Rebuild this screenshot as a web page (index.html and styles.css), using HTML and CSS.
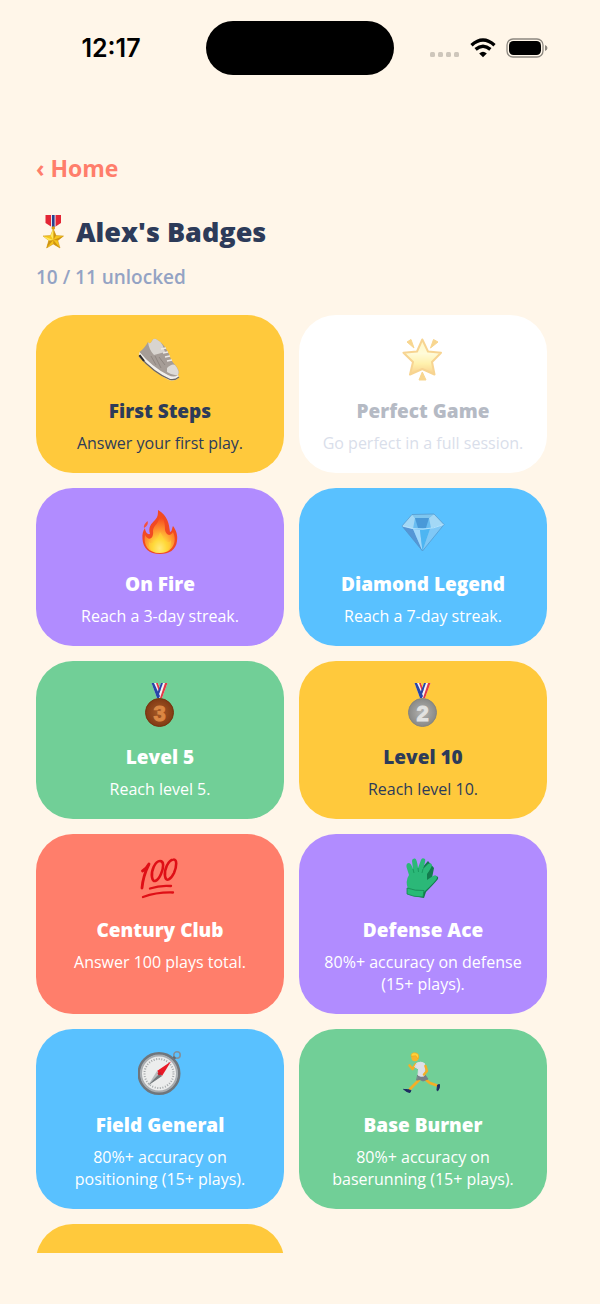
FILE: index.html
```html
<!DOCTYPE html>
<html lang="en">
<head>
  <meta charset="utf-8">
  <meta name="viewport" content="width=device-width, initial-scale=1">
  <title>Alex's Badges</title>
  <link rel="stylesheet" href="styles.css">
</head>
<body>
  <div class="screen">
    <header class="status-bar">
      <time class="clock">12:17</time>
      <div class="island"></div>
      <div class="status-icons">
        <svg width="30" height="20" viewBox="0 0 30 20" fill="#cec6bb">
          <rect x="0" y="14" width="5" height="5" rx="1.5"/>
          <rect x="8" y="14" width="5" height="5" rx="1.5"/>
          <rect x="16" y="14" width="5" height="5" rx="1.5"/>
          <rect x="24" y="14" width="5" height="5" rx="1.5"/>
        </svg>
        <svg width="26" height="20" viewBox="0 0 26 20" fill="none" stroke="#000" stroke-width="3.4">
          <path d="M1.5 7.2Q13-3 24.5 7.2"/>
          <path d="M5.6 11.4Q13 5 20.4 11.4"/>
          <path d="M13 19.3L9.2 15.4Q13 12.2 16.8 15.4Z" fill="#000" stroke="none"/>
        </svg>
        <svg width="42" height="20" viewBox="0 0 42 20">
          <rect x="1" y="1" width="36" height="18" rx="6" fill="none" stroke="#8d8880" stroke-width="1.3"/>
          <rect x="3" y="3" width="32" height="14" rx="4.5"/>
          <path d="M39 7Q41.5 8 41.5 10T39 13Z" fill="#8d8880"/>
        </svg>
      </div>
    </header>

    <main class="content">
      <a class="back" href="#">‹ Home</a>
      <h1 class="heading">
        <svg width="34" height="36" viewBox="0 0 34 36">
          <path d="M9.5 1H25V9L17.3 14L9.5 9Z" fill="#e32636"/>
          <path d="M15 1H19.6V13H15Z" fill="#e8e2ee"/>
          <path d="M16 1H18.6V13H16Z" fill="#26418f"/>
          <circle cx="17.3" cy="14" r="1.8" fill="#d99b12"/>
          <path d="M17.3 15L20 21.5L27.5 22L21.8 26.5L24 34L17.3 30L10.6 34L12.8 26.5L7 22L14.6 21.5Z" fill="#f6c51c" stroke="#c78e10" stroke-width=".5"/>
          <path d="M17.3 26V15L20 21.5ZM17.3 26L27.5 22L21.8 26.5ZM17.3 26L24 34L17.3 30ZM17.3 26L10.6 34L12.8 26.5Z" fill="#cf9312"/>
          <path d="M17.3 26V15L14.6 21.5ZM17.3 26L7 22L12.8 26.5Z" fill="#ffe85b"/>
        </svg>
        Alex's Badges
      </h1>
      <p class="progress">10 / 11 unlocked</p>

      <section class="badges">
        <article class="badge yellow">
          <svg class="icon" viewBox="0 0 44 44">
            <path d="M1.5 15L1 20Q16 36 31 43Q37 45 41 40L38 34Z" fill="#f2f0ed"/>
            <path d="M1 19Q16 36 32 42.5Q37 43.5 41 40" fill="none" stroke="#6d6660" stroke-width="1.2"/>
            <path d="M1.5 18L6 24" stroke="#2d2a2a" stroke-width="2"/>
            <path d="M1.5 15Q6 12 10 5Q12 8 14 4Q15 1 18 2Q23 5 27 10L31 17Q33 24 38 29Q42 34 40 38Q36 41 30 38Q14 30 1.5 15Z" fill="#a69d97"/>
            <path d="M10 5Q12 8 14 4Q15 1 18 2Q22 4 24.5 8L27 15L16 18Q11 13 10 5Z" fill="#d8d4cf"/>
            <path d="M29 31Q34 26 37 28Q42 34 40 38Q35 39 29 35Z" fill="#dedbd7"/>
            <path d="M13 19L18 28M17 19L23 31M21 20L27 28" fill="none" stroke="#8f8680" stroke-width="1"/>
            <path d="M23 12L28 11M25 16L30 15M27 20L32 19M29 24L34 23" stroke="#eeeae6" stroke-width="1.5"/>
          </svg>
          <h2>First Steps</h2>
          <p>Answer your first play.</p>
        </article>

        <article class="badge locked">
          <svg class="icon" viewBox="0 0 44 44">
            <defs>
              <linearGradient id="star" x2="0" y2="1">
                <stop offset="0" stop-color="#fff08a"/>
                <stop offset=".4" stop-color="#fff9b4"/>
                <stop offset=".7" stop-color="#ffe35a"/>
                <stop offset="1" stop-color="#f59f1c"/>
              </linearGradient>
            </defs>
            <g fill="#f3ae22" stroke="#f3ae22" stroke-linejoin="round">
              <path d="M6 5L10 2.5L13 11Z"/>
              <path d="M32.500 2.500L37 5L29.500 11Z"/>
              <path d="M21.300 35L18 43H25Z"/>
            </g>
            <path d="M21.3 2.5L27 14.500L40 15.700L31 25L33.500 37.500L21.300 32L9 37.500L12 25L2.500 15.700L16 14.500Z" fill="url(#star)" stroke="#f1aa25" stroke-width="2" stroke-linejoin="round"/>
          </svg>
          <h2>Perfect Game</h2>
          <p>Go perfect in a full session.</p>
        </article>

        <article class="badge purple">
          <svg class="icon" viewBox="0 0 44 44">
            <defs>
              <radialGradient id="flame" cx=".5" cy=".88" r=".78">
                <stop offset="0" stop-color="#fff8b8"/>
                <stop offset=".3" stop-color="#ffd83b"/>
                <stop offset=".6" stop-color="#ff9630"/>
                <stop offset="1" stop-color="#f64a20"/>
              </radialGradient>
            </defs>
            <path d="M20 0C30 6 31 14 32 22C34 22 34 18 35 16C38 20 40 25 39 31C38 40 31 44 22 44C11 44 5 38 4.500 29C4 24 5 21 7 18C7 21 9 25 12 24C10 17 13 14 17 10C20 7 20 4 20 0Z" fill="#f14a22"/>
            <path d="M21 4C27 9 27 15 27 20C28 25 32 27 35 22C40 32 34 43 22 43C10 43 5 35 7 25C11 32 16 28 15 21C15 15 23 13 21 4Z" fill="url(#flame)"/>
            <path d="M22 22C25 25 25 30 28 31C30 33 32 32 33 30C34 38 29 43 22 43C14 43 10 38 11 32C15 36 20 29 22 22Z" fill="#ffda37" opacity=".45"/>
            <path d="M6 18Q5 15 9.500 11Q11 15 6 18Z" fill="#f4513c"/>
          </svg>
          <h2>On Fire</h2>
          <p>Reach a 3-day streak.</p>
        </article>

        <article class="badge blue">
          <svg class="icon" viewBox="0 0 44 44">
            <path d="M1 16L11 4.500L33 4L43 14.500L21.500 41Z" fill="#69bdf1"/>
            <path d="M1 16L11 4.500L14 8L12 19ZM33 4L43 14.500L30 18L28 8Z" fill="#a3d8f6"/>
            <path d="M14 8H28L25 18H17Z" fill="#4999d8"/>
            <path d="M11 4.500L33 4L28 8H14Z" fill="#7fc6ef"/>
            <path d="M1 16L12 19L21.500 41Z" fill="#5596d6"/>
            <path d="M12 19L19 20L21.500 41Z" fill="#a1d8fb"/>
            <path d="M19 20L29 19L21.500 41Z" fill="#4db5f2"/>
            <path d="M29 19L43 14.500L21.500 41Z" fill="#7fc8f6"/>
            <path d="M1 16Q22 23 43 14.500" fill="none" stroke="#c4ebff" stroke-width=".8"/>
            <path d="M1 16L11 4.500L33 4L43 14.500L21.500 41Z" fill="none" stroke="#4c8fc4" stroke-width=".6"/>
          </svg>
          <h2>Diamond Legend</h2>
          <p>Reach a 7-day streak.</p>
        </article>

        <article class="badge green">
          <svg class="icon" viewBox="0 0 44 44">
            <defs>
              <radialGradient id="bronze">
                <stop offset="0" stop-color="#a95b27"/>
                <stop offset="1" stop-color="#813a14"/>
              </radialGradient>
            </defs>
            <path d="M13.500 0H29.500L24 15H19Z" fill="#f4f4fa"/>
            <path d="M13.500 0H16L22 13L21 15H19Z" fill="#2746a8"/>
            <path d="M18 0H20L22.500 7L21.500 10Z" fill="#e33a45"/>
            <path d="M20 0H23L21.500 4Z" fill="#71cf97"/>
            <path d="M23 0H25L20 14L19 11Z" fill="#2746a8"/>
            <path d="M27 0H29.500L24 15H22Z" fill="#e33a45"/>
            <circle cx="21.500" cy="29.500" r="14" fill="url(#bronze)" stroke="#76330e"/>
            <text class="medal-number" x="21.500" y="37.500" fill="#dc8743" stroke="#dc8743">3</text>
          </svg>
          <h2>Level 5</h2>
          <p>Reach level 5.</p>
        </article>

        <article class="badge yellow">
          <svg class="icon" viewBox="0 0 44 44">
            <defs>
              <radialGradient id="silver">
                <stop offset="0" stop-color="#b4b4b2"/>
                <stop offset="1" stop-color="#898987"/>
              </radialGradient>
            </defs>
            <path d="M13.500 0H29.500L24 15H19Z" fill="#f4f4fa"/>
            <path d="M13.500 0H16L22 13L21 15H19Z" fill="#2746a8"/>
            <path d="M18 0H20L22.500 7L21.500 10Z" fill="#e33a45"/>
            <path d="M20 0H23L21.500 4Z" fill="#ffc93c"/>
            <path d="M23 0H25L20 14L19 11Z" fill="#2746a8"/>
            <path d="M27 0H29.500L24 15H22Z" fill="#e33a45"/>
            <circle cx="21.500" cy="29.500" r="14" fill="url(#silver)" stroke="#858580"/>
            <text class="medal-number" x="21.500" y="37.500" fill="#e2e2e0" stroke="#e2e2e0">2</text>
          </svg>
          <h2>Level 10</h2>
          <p>Reach level 10.</p>
        </article>

        <article class="badge coral">
          <svg class="icon" viewBox="0 0 44 44" fill="none" stroke="#df0f16" stroke-linecap="round" stroke-linejoin="round">
            <path d="M4.500 15Q9 12 11 8Q5 20 4 32" stroke-width="2.800"/>
            <path d="M22 5C17 5 13 15 14 21C15 28 20 25 23 18C26 11 26 5 22 5Z" stroke-width="2.600"/>
            <path d="M35.500 3.500C30 4 26 14 27 20C28 27 33 23 36 17C39 10 39 3 35.500 3.500Z" stroke-width="2.600"/>
            <path d="M12 32.500Q22 29 33 30" stroke-width="2.300"/>
            <path d="M5 41Q19 36 35 36.500" stroke-width="2.300"/>
          </svg>
          <h2>Century Club</h2>
          <p>Answer 100 plays total.</p>
        </article>

        <article class="badge purple">
          <svg class="icon" viewBox="0 0 44 44">
            <path d="M13 40L23 42L25 36Q33 28 37 23Q38 20 34 20L31 22L33 12L27 5L20 13Z" fill="#137b4d"/>
            <path d="M7 33Q4 25 8 19L5.500 11Q5 7 8 7Q10 7 12 13L11 5Q11 2 14 2.500Q16 3 17 12L20 4Q21 1 24 3Q25 4 22 13L27 8Q30 6 31 9Q31 11 26 18L26 24L32 20Q36 18 36 22Q35 25 23 36Z" fill="#2bb878"/>
            <path d="M12 13L13 17M17 12L17.500 16M22 13L21 17" fill="none" stroke="#149258" stroke-width=".8"/>
            <path d="M6 32Q14 35 23 34.500L22 41Q12 41 6 38Z" fill="#28ba76" stroke="#148852" stroke-width=".8"/>
          </svg>
          <h2>Defense Ace</h2>
          <p>80%+ accuracy on defense (15+ plays).</p>
        </article>

        <article class="badge blue">
          <svg class="icon" viewBox="0 0 44 44">
            <circle cx="39" cy="4" r="3.200" fill="none" stroke="#82909b" stroke-width="1.600"/>
            <path d="M34 9L37 6" stroke="#626970" stroke-width="3"/>
            <circle cx="21" cy="22.500" r="20" fill="#e9ebec" stroke="#6f767c" stroke-width="3"/>
            <circle cx="21" cy="22.500" r="18" fill="#eceded" stroke="#a9adb1" stroke-width="2"/>
            <circle cx="21" cy="22.500" r="14.500" fill="none" stroke="#a3a7a9" stroke-width="2" stroke-dasharray="1 1.600"/>
            <path d="M33 10.500L24 25L19 20Z" fill="#e81927"/>
            <path d="M19 20L24 25L10 34.500Z" fill="#b8bcbe"/>
            <path d="M24 25L21.500 22.500L10 34.500Z" fill="#73797c"/>
            <circle cx="21.500" cy="22.500" r="1.800" fill="#c91d29"/>
          </svg>
          <h2>Field General</h2>
          <p>80%+ accuracy on positioning (15+ plays).</p>
        </article>

        <article class="badge green">
          <svg class="icon" viewBox="0 0 44 44" fill="none" stroke-linecap="round" stroke-linejoin="round">
            <path d="M15 13L11.500 18L8.500 14.500" stroke="#f4ae27" stroke-width="2.600"/>
            <path d="M18 29L14 33L9 38" stroke="#f4ae27" stroke-width="2.800"/>
            <path d="M24 28L29 32L36 34.500" stroke="#f4ae27" stroke-width="2.800"/>
            <path d="M3 38.500Q7 38 10 39.500L9 41.500Q5 41 3 38.500ZM36 39L36.500 34L38.500 33.500Q39 37 37 39.500Z" fill="#1e2c61" stroke="#1e2c61"/>
            <path d="M17 24L24 24L27 28L22 30L19 28.500L16 29Z" fill="#777f88" stroke="#777f88"/>
            <path d="M16 12Q20 10 23.500 12.500L24 18L23 25Q19 26 17 24L17.500 18L14 16Z" fill="#dfdfe8" stroke="#dfdfe8"/>
            <path d="M24.500 15L26 20L23 23.500" stroke="#f4ae27" stroke-width="2.500"/>
            <circle cx="14" cy="6.500" r="3.700" fill="#f7b52c"/>
            <path d="M10 5Q10 1 15 2Q19 3 17 8L15 5Z" fill="#ffd33c" stroke="#efaa1b" stroke-width=".7"/>
          </svg>
          <h2>Base Burner</h2>
          <p>80%+ accuracy on baserunning (15+ plays).</p>
        </article>

        <article class="badge yellow"></article>
      </section>
    </main>
  </div>
</body>
</html>
```

FILE: styles.css
```css
* {
  box-sizing: border-box;
}

body {
  margin: 0;
  background: #fff6e9;
  color: #2d3b59;
  font-family: "Open Sans", "Noto Sans", sans-serif;
}

h1, h2, p {
  margin: 0;
}

.screen {
  display: flex;
  flex-direction: column;
  height: 100vh;
  padding-bottom: 51px;
}

.status-bar {
  display: grid;
  grid-template-columns: 1fr 188px 1fr;
  align-items: center;
  padding-top: 21px;
  color: #000;
}

.clock {
  padding-left: 16px;
  text-align: center;
  font-family: Inter, sans-serif;
  font-size: 25px;
  font-weight: 600;
}

.island {
  height: 54px;
  border-radius: 27px;
  background: #000;
}

.status-icons {
  display: flex;
  justify-content: center;
  gap: 10px;
  padding-right: 16px;
}

.content {
  flex: 1;
  min-height: 0;
  overflow: hidden;
  padding: 77px 53px 0 36px;
}

.back {
  display: block;
  width: fit-content;
  color: #ff7e6b;
  font-size: 23px;
  font-weight: 700;
  line-height: 32px;
  text-decoration: none;
}

.heading {
  display: flex;
  align-items: center;
  gap: 6px;
  margin-top: 24px;
  font-size: 27px;
  font-weight: 800;
  line-height: 48px;
}

.progress {
  margin-top: 8px;
  color: #94a3c4;
  font-size: 19px;
  font-weight: 600;
  line-height: 26px;
}

.badges {
  display: grid;
  grid-template-columns: 1fr 1fr;
  gap: 15px;
  margin-top: 25px;
}

.badge {
  min-height: 158px;
  padding: 22px 18px 19px;
  border-radius: 37px;
  color: #fff;
  text-align: center;
}

.badge h2 {
  margin: 16px 0 7px;
  font-size: 19px;
  font-weight: 800;
  line-height: 28px;
}

.badge p {
  font-size: 16px;
  font-weight: 500;
  line-height: 22px;
}

.icon {
  display: block;
  width: 44px;
  height: 44px;
  margin: 0 auto;
}

.medal-number {
  font-family: "Liberation Sans", sans-serif;
  font-size: 22px;
  font-weight: 700;
  stroke-width: 1px;
  text-anchor: middle;
}

.yellow {
  background: #ffc93c;
  color: #2d3b59;
}

.purple {
  background: #b18cff;
}

.blue {
  background: #59c1ff;
}

.green {
  background: #71cf97;
}

.coral {
  background: #ff7e6b;
}

.locked {
  background: #fff;
  color: #2d3b59;
}

.locked .icon,
.locked h2,
.locked p {
  opacity: .35;
}

.locked .icon {
  opacity: .5;
}

.locked p {
  color: #94a3c4;
}
```
